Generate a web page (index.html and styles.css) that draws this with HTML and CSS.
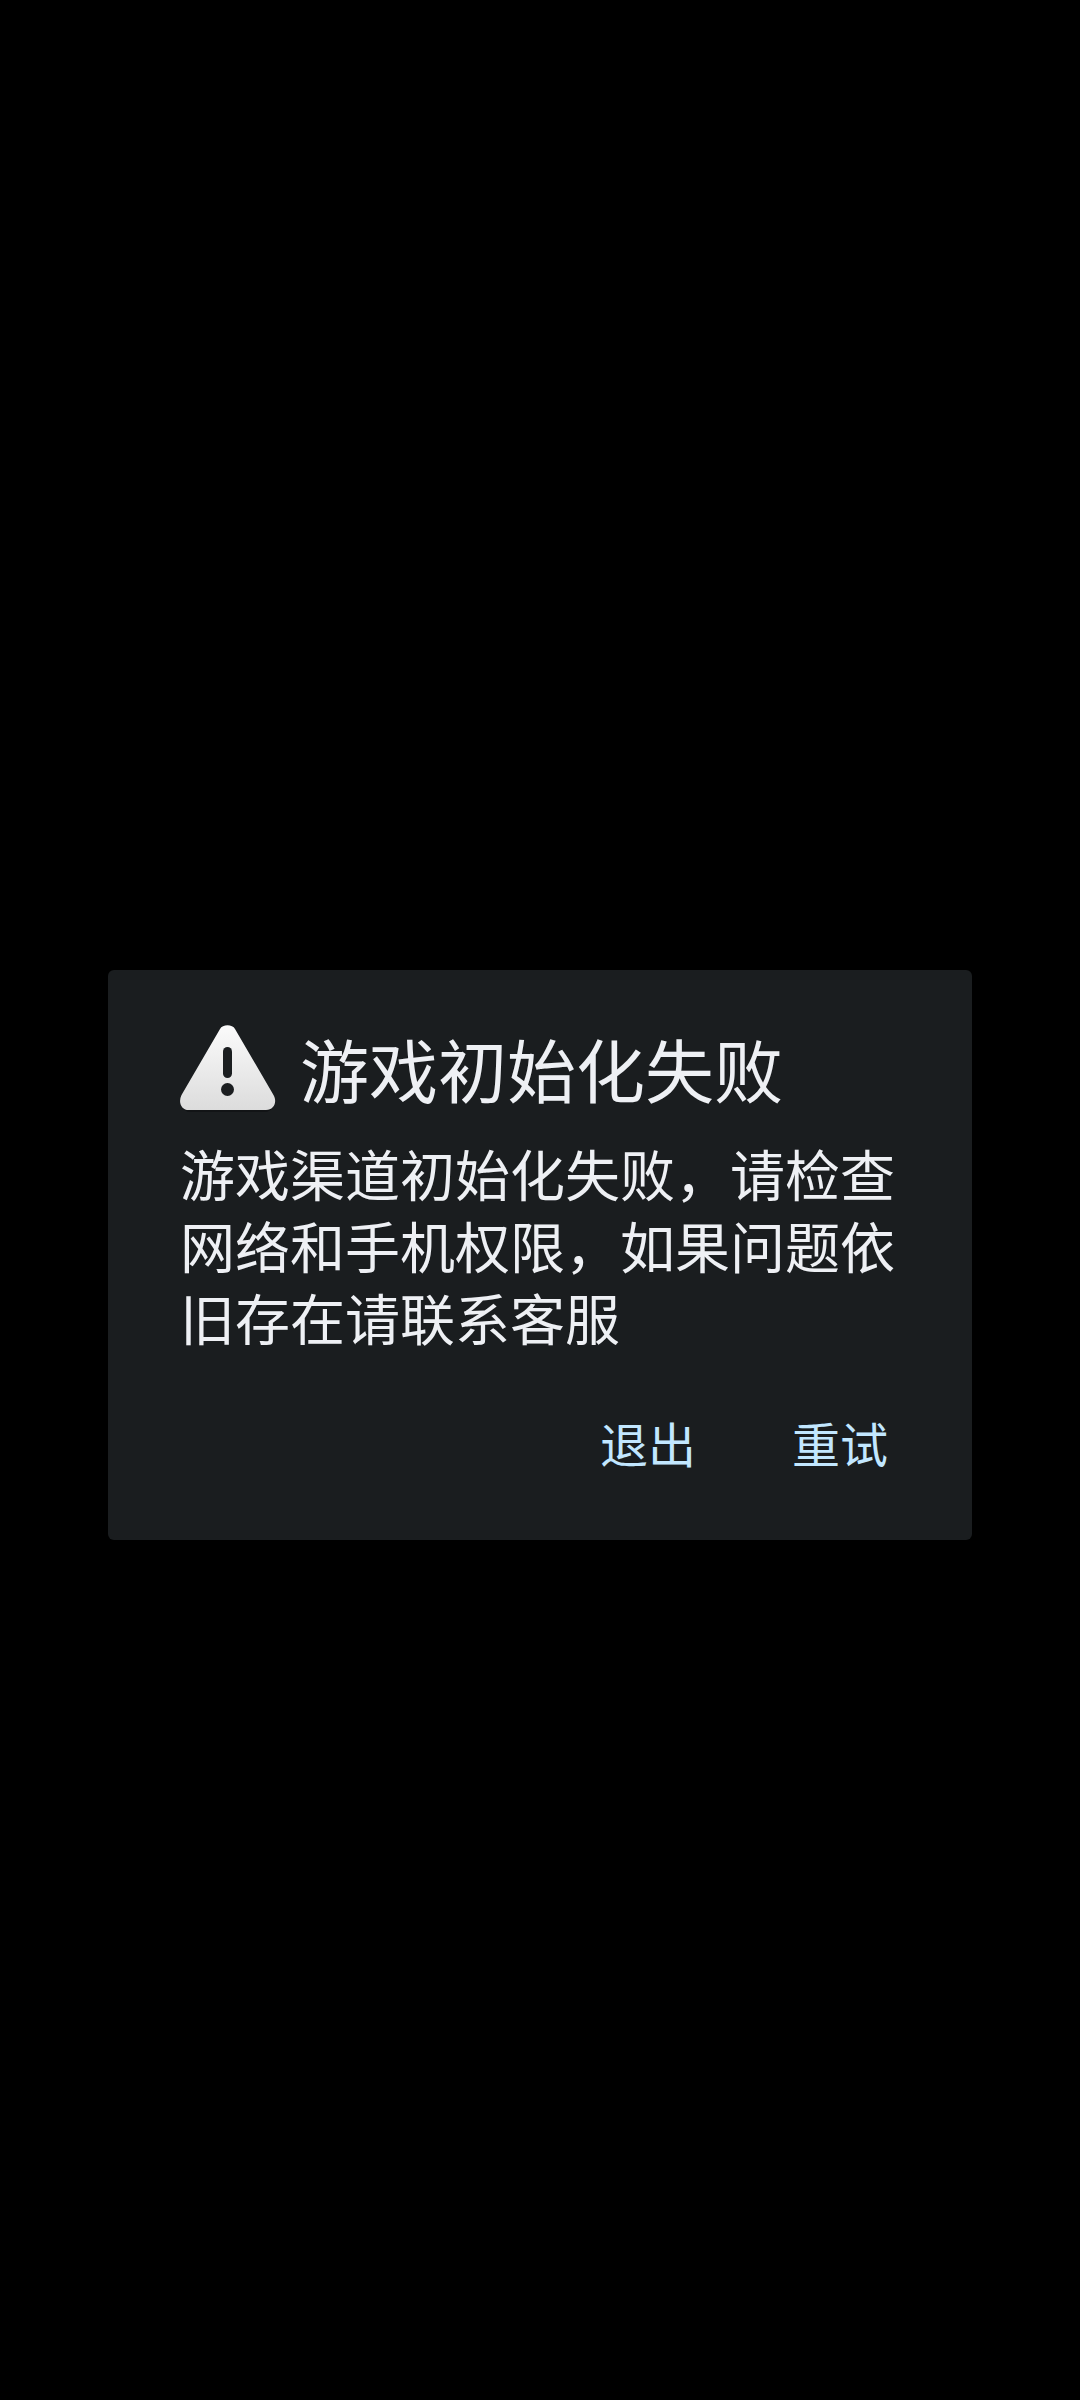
FILE: index.html
```html
<!DOCTYPE html>
<html lang="zh-CN">
<head>
  <meta charset="utf-8">
  <meta name="viewport" content="width=device-width, initial-scale=1">
  <title>游戏初始化失败</title>
  <link rel="stylesheet" href="styles.css">
</head>
<body class="screen">
  <main class="dialog" role="alertdialog" aria-labelledby="dialog-title" aria-describedby="dialog-message">
    <header class="dialog-header">
      <svg class="dialog-icon" viewBox="0 0 96 96" aria-hidden="true">
        <defs>
          <linearGradient id="sign" x1="0" y1="0" x2="0" y2="1">
            <stop offset="0" stop-color="#fbfbfb"/>
            <stop offset="1" stop-color="#dcdcdc"/>
          </linearGradient>
        </defs>
        <path fill="#121416" d="M40 7Q47.500-2 55 7L93.500 71Q98 83 87 88H8Q-3 83 1.500 71Z"/>
        <path fill="url(#sign)" d="M40 5C42.500 0 52.500 0 55 5L93.500 71C97.500 78 94 86 86 86H9C1 86-2 78 1.500 71Z"/>
        <rect x="43" y="23" width="9" height="31" rx="4.500" fill="#1b1e20"/>
        <circle cx="47.500" cy="65.500" r="6.500" fill="#1b1e20"/>
      </svg>
      <h1 class="dialog-title" id="dialog-title">游戏初始化失败</h1>
    </header>
    <p class="dialog-message" id="dialog-message">游戏渠道初始化失败，请检查网络和手机权限，如果问题依旧存在请联系客服</p>
    <div class="dialog-actions">
      <button class="dialog-button" type="button">退出</button>
      <button class="dialog-button" type="button">重试</button>
    </div>
  </main>
</body>
</html>
```
FILE: styles.css
```css
* {
  box-sizing: border-box;
}

.screen {
  display: flex;
  align-items: center;
  justify-content: center;
  min-height: 100vh;
  margin: 0;
  padding-top: 110px;
  background: #000;
  color: #eef0f4;
  font-family: KaiTi, "Noto Sans CJK SC", sans-serif;
}

.dialog {
  width: 80%;
  padding: 54px 48px 50px 72px;
  border-radius: 6px;
  background: #1a1d1f;
}

.dialog-header {
  display: flex;
  align-items: flex-start;
  gap: 24px;
  padding-right: 24px;
}

.dialog-icon {
  flex: none;
  width: 96px;
  height: 96px;
}

.dialog-title {
  margin: 0;
  font-size: 69px;
  font-weight: 400;
  line-height: 88px;
}

.dialog-message {
  margin: 16px 0 0;
  padding-right: 24px;
  font-size: 55px;
  line-height: 72px;
}

.dialog-actions {
  display: flex;
  justify-content: flex-end;
  gap: 24px;
  margin-top: 42px;
}

.dialog-button {
  padding: 0 36px;
  border: 0;
  background: transparent;
  color: #c2e7ff;
  font-family: inherit;
  font-size: 48px;
  line-height: 96px;
}
```
